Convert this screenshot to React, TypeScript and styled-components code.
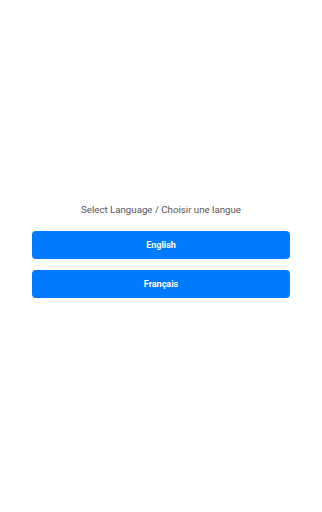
import styled, { createGlobalStyle } from 'styled-components';

const GlobalStyle = createGlobalStyle`
    html, body {
        margin: 0;
        padding: 0;
        background: #ffffff;
        font-family: Roboto, "Liberation Sans", sans-serif;
    }
`;

const Screen = styled.div`
    height: 512px;
    display: flex;
    flex-direction: column;
    align-items: center;
    justify-content: center;
`;

const Panel = styled.div`
    width: 80%;
    display: flex;
    flex-direction: column;
    align-items: stretch;
    gap: 11px;
    margin-top: -13px;
`;

const Prompt = styled.p`
    margin: 0 0 1px;
    text-align: center;
    font-size: 9.7px;
    line-height: 18px;
    color: #555555;
`;

const LanguageButton = styled.button`
    height: 28px;
    padding: 0;
    border: none;
    border-radius: 4px;
    background: #007bff;
    color: #ffffff;
    font-family: Roboto, "Liberation Sans", sans-serif;
    font-size: 9px;
    font-weight: bold;
    cursor: pointer;
`;

const App = () => {
    return <>
        <GlobalStyle />
        <Screen>
            <Panel>
                <Prompt>Select Language / Choisir une langue</Prompt>
                <LanguageButton>English</LanguageButton>
                <LanguageButton>Français</LanguageButton>
            </Panel>
        </Screen>
    </>
};

export default App;
